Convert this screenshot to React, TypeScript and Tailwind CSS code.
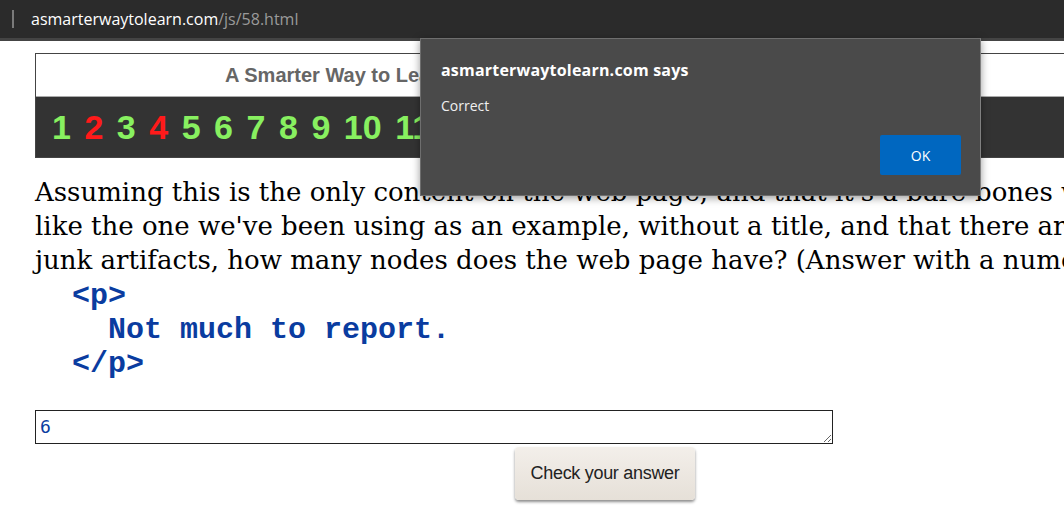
import React from 'react';

const digits = ['1', '2', '3', '4', '5', '6', '7', '8', '9', '10', '11', '12', '13', '14'];
const wrong = ['2', '4'];

const AlertDialog = () => (
  <div className="absolute left-[420px] top-[38px] w-[561px] h-[158px] bg-[#4a4a4a] border border-[#6e6e6e] border-r-[#808080] shadow-[0_2px_8px_rgba(0,0,0,0.4)]">
    <div className="pl-[20px] pt-[19px] text-white font-['Open_Sans',sans-serif]">
      <div className="text-[16px] font-bold leading-[24px] tracking-[0.2px]">asmarterwaytolearn.com says</div>
      <div className="mt-[14px] text-[14px] leading-[20px] text-[#f0f0f0]">Correct</div>
    </div>
    <button className="absolute left-[459px] top-[96px] w-[81px] h-[40px] bg-[#0067c0] rounded-[2px] text-white text-[14px] font-['Open_Sans',sans-serif]">
      OK
    </button>
  </div>
);

export default function App() {
  return (
    <div className="relative w-[1064px] h-[525px] overflow-hidden bg-white">
      {/* browser address bar */}
      <div className="h-[38px] bg-[#2b2b2b] flex items-center pl-[12px] font-['Open_Sans',sans-serif] text-[16px]">
        <span className="w-[2px] h-[18px] bg-[#7a7a7a] mr-[17px]" />
        <span className="text-white">asmarterwaytolearn.com</span>
        <span className="text-[#9a9a9a]">/js/58.html</span>
      </div>
      <div className="h-[3px] bg-[#444444]" />

      <div className="pl-[35px] pt-[12px]">
        {/* banner */}
        <div className="w-[1100px] border border-[#444] font-['Liberation_Sans',Arial,sans-serif]">
          <div className="h-[43px] bg-white border-b border-[#aaa] pl-[189px] flex items-center text-[20px] font-bold text-[#666]">
            A Smarter Way to Learn JavaScript
          </div>
          <div className="h-[60px] bg-[#333333] flex items-center pl-[16px] gap-[13.5px] text-[34px] font-bold">
            {digits.map((d) => (
              <span key={d} className={wrong.includes(d) ? 'text-[#ff1a1a]' : 'text-[#88f060]'}>
                {d}
              </span>
            ))}
          </div>
        </div>

        {/* question */}
        <div className="mt-[17px] whitespace-nowrap font-['DejaVu_Serif',Georgia,serif] text-[26px] leading-[34px] text-black">
          <div>Assuming this is the only content on the web page, and that it's a bare-bones web page</div>
          <div>like the one we've been using as an example, without a title, and that there are no</div>
          <div>junk artifacts, how many nodes does the web page have? (Answer with a numeral.)</div>
        </div>

        <pre className="mt-[2px] pl-[1px] font-['Liberation_Mono','Courier_New',monospace] font-bold text-[30px] leading-[34px] text-[#0a3ca0]">
{`  <p>
    Not much to report.
  </p>`}
        </pre>

        <textarea
          defaultValue="6"
          className="block mt-[29px] w-[798px] h-[34px] border border-[#222] px-[4px] py-[3px] font-['DejaVu_Sans_Mono',monospace] text-[18px] leading-[26px] text-[#0a3ca0] resize outline-none"
        />

        <div className="pl-[480px] pt-[3px]">
          <button className="w-[180px] h-[53px] rounded-[4px] bg-gradient-to-b from-[#f3efea] to-[#e6e0d8] shadow-[0_2px_3px_rgba(0,0,0,0.45)] text-[18px] text-[#222] font-['Liberation_Sans',Arial,sans-serif] tracking-[-0.3px]">
            Check your answer
          </button>
        </div>
      </div>

      <AlertDialog />
    </div>
  );
}
